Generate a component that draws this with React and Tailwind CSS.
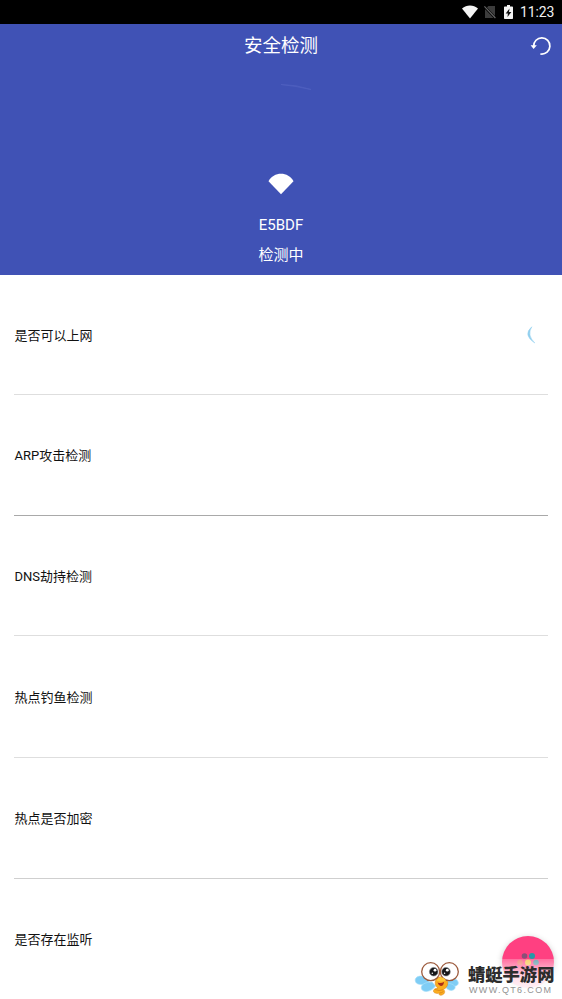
import React from 'react';

const checks = [
  { label: '是否可以上网', height: 'h-[120px]', line: 'border-[#dedede]', loading: true },
  { label: 'ARP攻击检测', height: 'h-[121px]', line: 'border-[#a9a9a9]' },
  { label: 'DNS劫持检测', height: 'h-[120px]', line: 'border-[#dedede]' },
  { label: '热点钓鱼检测', height: 'h-[122px]', line: 'border-[#dedede]' },
  { label: '热点是否加密', height: 'h-[121px]', line: 'border-[#cfcfcf]' },
  { label: '是否存在监听', height: 'h-[121px]', line: 'border-transparent' },
];

function StatusBar() {
  return (
    <div className="flex h-6 shrink-0 items-center justify-end bg-black pr-2 text-[#f0f0f0]">
      <svg width="16" height="14" viewBox="0 0 16 14" className="mr-[6px]">
        <path d="M0 3.600C4.600-.5 11.400-.5 16 3.600L8 13.600Z" fill="#f4f4f4" />
      </svg>
      <svg width="12" height="14" viewBox="0 0 12 14" className="mr-[8px]">
        <path d="M4.400 1H11v12H1V4.400Z" fill="#3c3c3c" />
        <path d="M0 1.200L11.600 13.400" stroke="#000" strokeWidth="2.4" />
        <path d="M0.400 1.400L11.400 13" stroke="#686868" strokeWidth="1.1" />
      </svg>
      <svg width="9" height="14" viewBox="0 0 9 14" className="mr-[7px]">
        <path d="M3 0h3v1.400h2.200q.8 0 .8.8v11q0 .8-.8.8H.8q-.8 0-.8-.8v-11q0-.8.8-.8H3Z" fill="#f4f4f4" />
        <path d="M5.500 3.500L1.700 8.400h2.200L3.500 12l3.900-5H5Z" fill="#111" />
      </svg>
      <span className="w-[34px] whitespace-nowrap text-[14px] leading-6 tracking-[-0.1px]">11:23</span>
    </div>
  );
}

function Header() {
  return (
    <header className="flex h-[251px] shrink-0 flex-col items-center bg-[#4052b5] text-white">
      <div className="grid h-[43px] w-full grid-cols-[1fr_auto_1fr] items-center">
        <span />
        <h1 className="pt-[2px] text-[18.5px] leading-[41px]">安全检测</h1>
        <button type="button" aria-label="刷新" className="mr-[10px] justify-self-end">
          <svg width="22" height="20" viewBox="0 0 22 20" fill="none" className="block">
            <path d="M3.700 10.200A8.100 8.100 0 1 1 11 18" stroke="#fff" strokeWidth="1.7" strokeLinecap="round" />
            <path d="M.6 9.300h6.200L3.600 12.900Z" fill="#fff" />
          </svg>
        </button>
      </div>
      {/* scanning ring */}
      <svg width="110" height="96" viewBox="0 0 110 96" fill="none" className="mt-[14px]">
        <path d="M55 3.500Q70 3.500 85 8.500Q70 5 55 3.500" stroke="#4f60bf" strokeWidth=".8" />
      </svg>
      <svg width="26" height="22" viewBox="0 0 26 22" className="-mt-[4px]">
        <path d="M.5 8.300C5.500-1.800 20.500-1.800 25.500 8.300L13 21.300Z" fill="#fff" />
      </svg>
      <p className="mt-[18px] text-[15px] leading-[24px]">E5BDF</p>
      <p className="mt-[6px] text-[15px] leading-[24px]">检测中</p>
    </header>
  );
}

function CheckRow({ item }) {
  return (
    <li className={`flex shrink-0 items-center justify-between border-b ${item.height} ${item.line}`}>
      <span className="pt-[2px] pl-[0.5px] text-[13px] leading-5">{item.label}</span>
      {item.loading && (
        <svg width="22" height="22" viewBox="0 0 22 22" fill="none">
          <path d="M5.800 2.800Q-3.600 11 8.800 19Q.6 11 5.800 2.800" fill="#8ecdee" stroke="#9ed5f0" strokeWidth=".6" />
        </svg>
      )}
    </li>
  );
}

function Mascot() {
  return (
    <svg width="48" height="38" viewBox="0 0 48 38" className="shrink-0">
      <g fill="#7fcdf5" stroke="#a5def9" strokeWidth=".7">
        <path d="M13 19C6 15 .5 18 1.300 22c.7 4 7 4.500 14 2Z" />
        <path d="M18 23C11 23 6 26 7.500 30c2 4 10 3 14-3Z" />
        <path d="M34 22c5-4 10-2 10.300 2-.3 4-6 4-11 1Z" />
        <path d="M31 24c7 0 12 3 9.500 6-3 3-8 1-10-4Z" />
      </g>
      {/* body and curled tail */}
      <path d="M23 19c5-3 11 0 10.800 5-.2 4-2.500 5.500-4.300 6.500 2 1.500 1.500 4.500-1.500 5.500-2.500.8-3.500-.5-2.500-1.700-2.500.4-6.500 0-6-2.800.5-2 3-2.200 4.500-2.500-3-1.500-4-6.500-1-10Z" fill="#fbad20" stroke="#d78319" strokeWidth=".5" />
      <path d="M21 30.500q4 2 8 .2M25.500 34q2 0 4-1.500" fill="none" stroke="#d98316" strokeWidth=".8" />
      <path d="M23.500 23.500q4 1.500 6.500-.8-.5 4.500-3.200 4.300-2.300-.5-3.300-3.500Z" fill="#a92d1a" />
      <g fill="#fff" stroke="#9c5a3c" strokeWidth="1.300">
        <circle cx="16.700" cy="12.700" r="9" />
        <circle cx="35.300" cy="12.700" r="9" />
      </g>
      <g fill="#171719" stroke="#84878a" strokeWidth=".6">
        <circle cx="19.700" cy="12.700" r="4.300" />
        <circle cx="32" cy="12.700" r="4.300" />
      </g>
      <g fill="#fff">
        <circle cx="21" cy="11.200" r="1.400" />
        <circle cx="33.300" cy="11.200" r="1.400" />
        <circle cx="18.300" cy="14.300" r=".7" />
        <circle cx="30.600" cy="14.300" r=".7" />
      </g>
      <path d="M22.500 21.500q1.500-3 4-3.500 4 .5 5.500 3.500-4 2.300-9.500 0Z" fill="#ffc83b" />
    </svg>
  );
}

function FloatingButton() {
  return (
    <button type="button" aria-label="更多" className="absolute top-[936px] left-[502px] size-[52px] rounded-full bg-[#ff4081] shadow-[0_2px_6px_rgba(0,0,0,0.25)]">
      <svg width="52" height="52" viewBox="0 0 52 52" className="block">
        <circle cx="22.500" cy="20" r="2.800" fill="#8a5078" />
        <circle cx="30" cy="20" r="3" fill="#2799a7" />
        <circle cx="18" cy="26.500" r="2.800" fill="#ed6c60" />
        <circle cx="26" cy="26.500" r="3" fill="#f3c040" />
        <circle cx="34" cy="26.500" r="2.800" fill="#4f8f9f" />
      </svg>
    </button>
  );
}

function Watermark() {
  return (
    <div className="absolute top-[959px] left-[414px] flex h-10 w-[148px] items-start">
      <div className="absolute top-0 right-0 h-10 w-[98px] bg-gradient-to-b from-white/25 via-white/85 to-white" />
      <Mascot />
      <div className="relative ml-[6px] whitespace-nowrap">
        <p className="mt-[5px] text-[17.3px] leading-[22px] font-black text-[#2c2c2c]">蜻蜓手游网</p>
        <p className="ml-[1px] font-['Liberation_Sans'] text-[9px] leading-[9px] tracking-[1.35px] text-[#929292]">WWW.QT6.COM</p>
      </div>
    </div>
  );
}

export default function App() {
  return (
    <div className="relative flex h-[999px] w-[562px] flex-col overflow-hidden bg-white font-[Roboto,'Noto_Sans_CJK_SC',sans-serif] text-[#111]">
      <StatusBar />
      <Header />
      <ul className="flex flex-col px-[14px]">
        {checks.map((item) => (
          <CheckRow key={item.label} item={item} />
        ))}
      </ul>
      <FloatingButton />
      <Watermark />
    </div>
  );
}
